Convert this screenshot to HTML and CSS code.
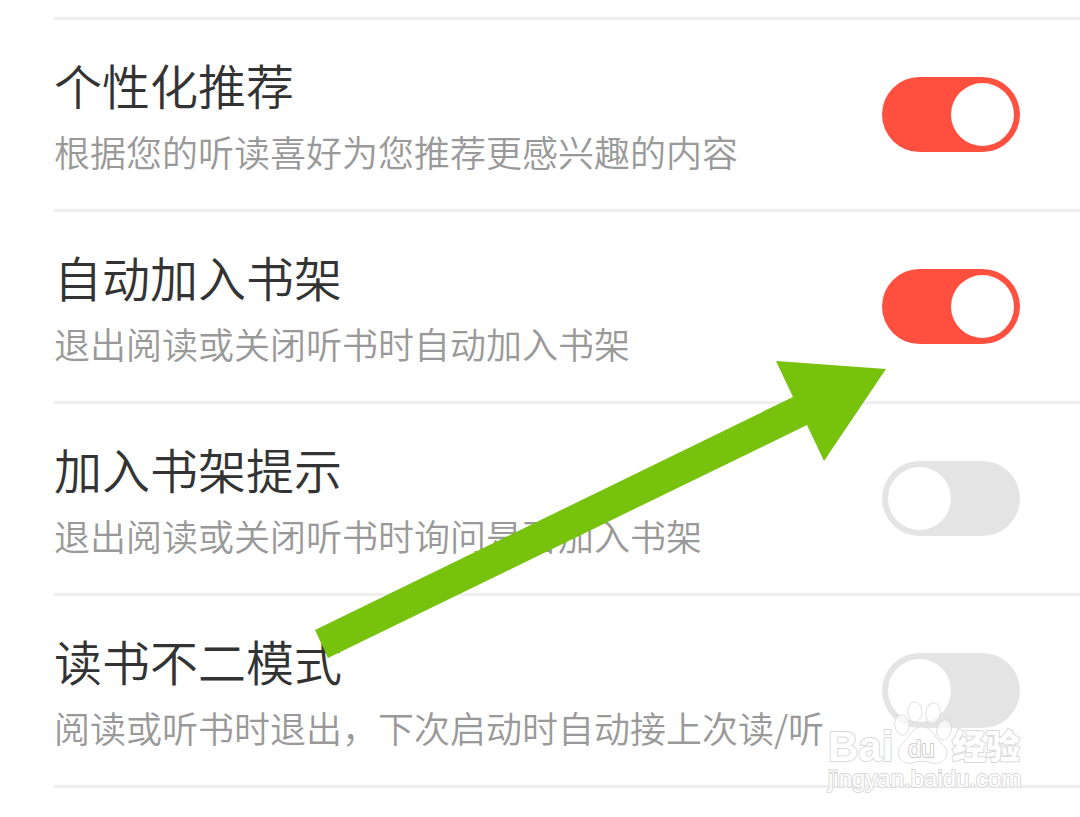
FILE: index.html
```
<!DOCTYPE html>
<html lang="zh-CN">

	<head>
		<meta charset="UTF-8" />
		<meta name="viewport" content="width=device-width, initial-scale=1.0" />
		<title>设置</title>
		<link rel="stylesheet" href="styles.css">
	</head>

	<body>
		<main class="page">
			<ul class="settings">
				<li class="row">
					<label class="text" for="recommend">
						<span class="title">个性化推荐</span>
						<span class="desc">根据您的听读喜好为您推荐更感兴趣的内容</span>
					</label>
					<input class="switch" type="checkbox" id="recommend" checked>
				</li>
				<li class="row">
					<label class="text" for="auto-add">
						<span class="title">自动加入书架</span>
						<span class="desc">退出阅读或关闭听书时自动加入书架</span>
					</label>
					<input class="switch" type="checkbox" id="auto-add" checked>
				</li>
				<li class="row">
					<label class="text" for="add-tip">
						<span class="title">加入书架提示</span>
						<span class="desc">退出阅读或关闭听书时询问是否加入书架</span>
					</label>
					<input class="switch" type="checkbox" id="add-tip">
				</li>
				<li class="row">
					<label class="text" for="resume">
						<span class="title">读书不二模式</span>
						<span class="desc">阅读或听书时退出，下次启动时自动接上次读/听</span>
					</label>
					<input class="switch" type="checkbox" id="resume">
				</li>
			</ul>

			<!-- arrow pointing at the second switch -->
			<svg class="arrow" width="571" height="298" viewBox="315 361 571 298" aria-hidden="true">
				<path d="M886 369L824 461L807 425L328 658L315 630L793 397L776 361Z" />
			</svg>

			<svg class="watermark" width="200" height="100" viewBox="826 698 200 100">
				<text class="brand" x="828" y="761">Bai</text>
				<g class="paw">
					<ellipse cx="902" cy="725" rx="7" ry="10" transform="rotate(-8 902 725)" />
					<ellipse cx="915" cy="712" rx="7" ry="10" />
					<ellipse cx="933" cy="713" rx="7" ry="10" transform="rotate(8 933 713)" />
					<ellipse cx="944" cy="730" rx="7" ry="10" transform="rotate(12 944 730)" />
					<path d="M922 727C931 727 934 736 940 742C949 748 949 759 941 762C934 765 929 761 922 761C915 761 911 765 904 762C896 758 897 748 904 742C910 736 913 727 922 727Z" />
				</g>
				<text class="du" x="908" y="757">du</text>
				<text class="name" x="952" y="759">经验</text>
				<text class="url" x="828" y="787">jingyan.baidu.com</text>
			</svg>
		</main>
	</body>

</html>
```
FILE: styles.css
```
body {
	margin: 0;
	background: #fff;
	font-family: "Noto Sans CJK SC", "Noto Sans", sans-serif;
}

.page {
	position: relative;
	padding: 17px 0 29px;
}

.settings {
	list-style: none;
	margin: 0 0 0 54px;
	padding: 0;
	border-top: 3px solid #eee;
}

.row {
	display: flex;
	align-items: center;
	justify-content: space-between;
	padding-right: 60px;
	border-bottom: 3px solid #eee;
}

.text {
	display: flex;
	flex-direction: column;
	gap: 13px;
	padding: 34px 0;
	white-space: nowrap;
}

.title {
	font-size: 48px;
	line-height: 60px;
	font-weight: 350;
	color: #333;
}

.desc {
	font-size: 36px;
	line-height: 48px;
	font-weight: 350;
	color: #999;
}

.switch {
	appearance: none;
	flex: none;
	box-sizing: border-box;
	width: 138px;
	height: 75px;
	margin: 0;
	padding: 6px;
	border-radius: 38px;
	background: #e4e4e4;
	cursor: pointer;
}

.switch::before {
	content: "";
	display: block;
	width: 63px;
	height: 63px;
	border-radius: 50%;
	background: #fff;
}

.switch:checked {
	background: #ff503f;
}

.switch:checked::before {
	margin-left: auto;
}

.arrow {
	position: absolute;
	left: 315px;
	top: 361px;
	fill: #77c20d;
	pointer-events: none;
}

.watermark {
	position: absolute;
	right: 54px;
	top: 698px;
	fill: #fff;
	stroke: #d9d9d9;
	stroke-width: 2px;
	stroke-linejoin: round;
	paint-order: stroke;
	pointer-events: none;
}

.paw {
	fill: rgba(255, 255, 255, 0.7);
	stroke: #d0d0d0;
	stroke-width: 1px;
}

.brand {
	font: bold 42px "Liberation Sans", sans-serif;
}

.du {
	font: 24px "Liberation Sans", sans-serif;
	stroke: #ccc;
}

.name {
	font: 900 34px "Noto Sans CJK SC", sans-serif;
}

.url {
	font: 24px "Liberation Sans", sans-serif;
}
```
